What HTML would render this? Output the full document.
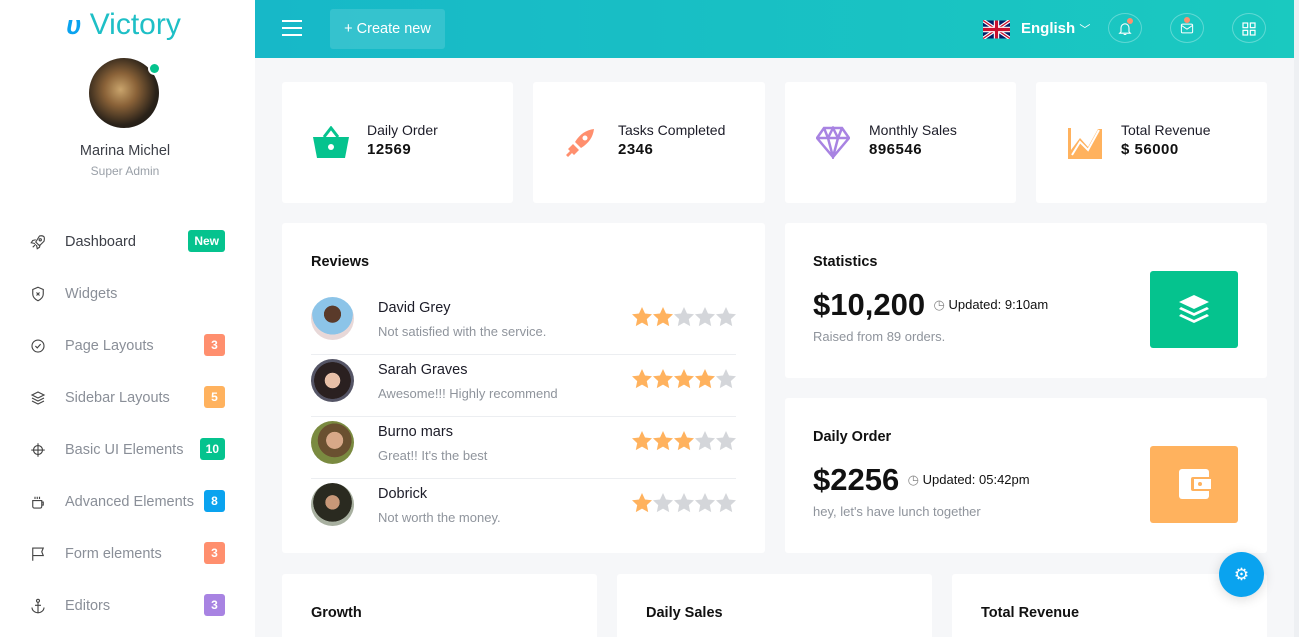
<!DOCTYPE html>
<html><head><meta charset="utf-8"><style>
*{box-sizing:border-box;margin:0;padding:0}
html,body{width:1299px;height:637px;overflow:hidden}
body{background:#f6f7f9;font-family:"Liberation Sans",sans-serif;position:relative}
.abs{position:absolute}
.side{left:0;top:0;width:255px;height:637px;background:#fff}
.hdr{left:255px;top:0;width:1039px;height:58px;background:linear-gradient(90deg,#17b8c8,#1ac9c0)}
.strip{left:1294px;top:0;width:5px;height:637px;background:#eef0f3}
.card{background:#fff;border-radius:3px;position:absolute}
.nav{position:absolute;left:0;width:255px;height:30px}
.nav svg{position:absolute;left:29px;top:7px}
.nav .t{position:absolute;left:65px;top:8px;font-size:14.5px;color:#8a8f98}
.badge{position:absolute;right:30px;top:4px;height:22px;min-width:21px;padding:0 6px;border-radius:3px;color:#fff;font-size:12px;font-weight:bold;text-align:center;line-height:22px}
.st .l{font-size:14px;color:#1c1c28}
.st .v{font-size:15px;font-weight:bold;color:#111;margin-top:3px;letter-spacing:.5px}
.rv{position:absolute;left:29px;width:425px;height:62px}
.av{position:absolute;left:0;top:4px;width:43px;height:43px;border-radius:50%}
.rv .n{position:absolute;left:67px;top:7px;font-size:14.5px;color:#1c1c28}
.rv .c{position:absolute;left:67px;top:31px;font-size:13px;color:#8f949c}
.stars{position:absolute;right:0;top:14px}
.h{font-size:14.5px;font-weight:bold;color:#111}
.big{font-size:31px;font-weight:bold;color:#111}
.up{font-size:13px;color:#111}
.sub{font-size:13px;color:#8f949c}
.ib{position:absolute;width:34px;height:30px;border-radius:50%;border:1px solid rgba(255,255,255,.3)}
</style></head><body>
<svg width="0" height="0" style="position:absolute"><defs><path id="s" d="M10 0l3 6.5 7 .8-5.2 4.8 1.4 7L10 15.6 3.8 19.1l1.4-7L0 7.3l7-.8z"/></defs></svg>
<div class="abs side">
 <div class="abs" style="left:66px;top:8px;font-size:30px;color:#1ebfc6;font-weight:500"><span style="color:#0aa3ef;font-style:italic;font-weight:bold;font-size:26px">υ</span> Victory</div>
 <div class="abs" style="left:89px;top:58px;width:70px;height:70px;border-radius:50%;background:radial-gradient(circle at 45% 45%,#c9a46c 0,#8a6238 30%,#2a2219 65%,#111 100%)"></div>
 <div class="abs" style="left:150px;top:64px;width:9px;height:9px;border-radius:50%;background:#05c38e;box-shadow:0 0 0 2px #fff"></div>
 <div class="abs" style="left:0;width:250px;top:143px;text-align:center;font-size:14.5px;color:#3c3f47">Marina Michel</div>
 <div class="abs" style="left:0;width:250px;top:164px;text-align:center;font-size:12px;color:#9aa0a8">Super Admin</div>
 <div class="nav" style="top:226px"><svg width="18" height="18" viewBox="0 0 24 24" fill="none" stroke="#444" stroke-width="1.5"><path d="M5 19l4-4M14 4c4-1 6 1 6 1s1 2 0 6l-6 6-5-5z M9 9l-4 1-2 3 5 1M15 15l-1 4-3 2-1-5"/><circle cx="15" cy="9" r="1.5"/></svg><span class="t" style="color:#3c3f47">Dashboard</span><span class="badge" style="background:#05c38e">New</span></div>
 <div class="nav" style="top:278px"><svg width="18" height="18" viewBox="0 0 24 24" fill="none" stroke="#444" stroke-width="1.5"><path d="M12 3l7 3v6c0 4-3 7-7 9-4-2-7-5-7-9V6z M10 10l4 4M14 10l-4 4"/></svg><span class="t">Widgets</span></div>
 <div class="nav" style="top:330px"><svg width="18" height="18" viewBox="0 0 24 24" fill="none" stroke="#444" stroke-width="1.5"><circle cx="12" cy="12" r="8"/><path d="M8.5 12l2.5 2.5 4.5-5"/></svg><span class="t">Page Layouts</span><span class="badge" style="background:#ff8f6e">3</span></div>
 <div class="nav" style="top:382px"><svg width="18" height="18" viewBox="0 0 24 24" fill="none" stroke="#444" stroke-width="1.5"><path d="M12 4l8 4-8 4-8-4z M4 12l8 4 8-4 M4 16l8 4 8-4"/></svg><span class="t">Sidebar Layouts</span><span class="badge" style="background:#ffb25e">5</span></div>
 <div class="nav" style="top:434px"><svg width="18" height="18" viewBox="0 0 24 24" fill="none" stroke="#444" stroke-width="1.5"><circle cx="12" cy="12" r="6"/><path d="M12 3v18M3 12h18"/></svg><span class="t">Basic UI Elements</span><span class="badge" style="background:#05c38e">10</span></div>
 <div class="nav" style="top:486px"><svg width="18" height="18" viewBox="0 0 24 24" fill="none" stroke="#444" stroke-width="1.5"><path d="M5 10h12v8a2 2 0 01-2 2H7a2 2 0 01-2-2z M17 12h2v4h-2 M8 5v3M11 5v3M14 5v3"/></svg><span class="t">Advanced Elements</span><span class="badge" style="background:#0aa3ef">8</span></div>
 <div class="nav" style="top:538px"><svg width="18" height="18" viewBox="0 0 24 24" fill="none" stroke="#444" stroke-width="1.5"><path d="M5 21V4h14l-2 5 2 5H5"/></svg><span class="t">Form elements</span><span class="badge" style="background:#ff8f6e">3</span></div>
 <div class="nav" style="top:590px"><svg width="18" height="18" viewBox="0 0 24 24" fill="none" stroke="#444" stroke-width="1.5"><circle cx="12" cy="5" r="2"/><path d="M12 7v14M8 11h8M4 14c0 4 4 7 8 7s8-3 8-7"/></svg><span class="t">Editors</span><span class="badge" style="background:#a883e2">3</span></div>
</div>
<div class="abs hdr">
 <div class="abs" style="left:27px;top:20px;width:20px;height:2px;background:#fff;box-shadow:0 7px 0 #fff,0 14px 0 #fff"></div>
 <div class="abs" style="left:75px;top:9px;width:115px;height:40px;border-radius:3px;background:rgba(255,255,255,.13);color:#fff;font-size:14.5px;line-height:40px;text-align:center">+ Create new</div>
 <svg class="abs" style="left:728px;top:20px" width="27" height="19" viewBox="0 0 60 40"><rect width="60" height="40" fill="#012169"/><path d="M0 0L60 40M60 0L0 40" stroke="#fff" stroke-width="8"/><path d="M0 0L60 40M60 0L0 40" stroke="#c8102e" stroke-width="3"/><path d="M30 0v40M0 20h60" stroke="#fff" stroke-width="12"/><path d="M30 0v40M0 20h60" stroke="#c8102e" stroke-width="7"/></svg>
 <div class="abs" style="left:766px;top:20px;color:#fff;font-size:15px;font-weight:bold">English <span style="font-weight:normal;font-size:11px">﹀</span></div>
 <div class="ib" style="left:853px;top:13px"><svg style="position:absolute;left:8px;top:6px" width="16" height="17" viewBox="0 0 24 24" fill="none" stroke="#fff" stroke-width="1.6"><path d="M6 17V11a6 6 0 0112 0v6l2 2H4z M10 21h4"/></svg><span class="abs" style="left:18px;top:4px;width:6px;height:6px;border-radius:50%;background:#ff8f6e"></span></div>
 <div class="ib" style="left:915px;top:13px"><svg style="position:absolute;left:8px;top:7px" width="16" height="15" viewBox="0 0 24 24" fill="none" stroke="#fff" stroke-width="1.6"><rect x="3" y="5" width="18" height="14" rx="2"/><path d="M3 7l9 6 9-6"/></svg><span class="abs" style="left:13px;top:3px;width:6px;height:6px;border-radius:50%;background:#ff8f6e"></span></div>
 <div class="ib" style="left:977px;top:13px"><svg style="position:absolute;left:8px;top:7px" width="16" height="16" viewBox="0 0 24 24" fill="none" stroke="#fff" stroke-width="1.8"><rect x="3" y="3" width="7" height="7"/><rect x="14" y="3" width="7" height="7"/><rect x="3" y="14" width="7" height="7"/><rect x="14" y="14" width="7" height="7"/></svg></div>
</div>
<div class="abs strip"></div>

<div class="card" style="left:282px;top:82px;width:231px;height:121px">
 <svg class="abs" style="left:31px;top:44px" width="36" height="32" viewBox="0 0 36 32"><path d="M11 11L18 2l7 9" stroke="#05c38e" stroke-width="3" fill="none"/><path d="M0 11h36l-4 21H4z" fill="#05c38e"/><circle cx="18" cy="21" r="3" fill="#fff"/></svg>
 <div class="abs st" style="left:85px;top:40px"><div class="l">Daily Order</div><div class="v">12569</div></div></div>
<div class="card" style="left:533px;top:82px;width:232px;height:121px">
 <svg class="abs" style="left:32px;top:46px" width="30" height="30" viewBox="0 0 30 30"><path d="M29 1c-8 1-14 5-19 13l6 6c8-5 12-11 13-19z" fill="#ff8f6e"/><circle cx="20" cy="10" r="2.5" fill="#fff"/><path d="M8 16l6 6-5 5-6-6z M1 27l5-5 2 2-5 5z" fill="#ff8f6e"/></svg>
 <div class="abs st" style="left:85px;top:40px"><div class="l">Tasks Completed</div><div class="v">2346</div></div></div>
<div class="card" style="left:785px;top:82px;width:231px;height:121px">
 <svg class="abs" style="left:31px;top:44px" width="34" height="33" viewBox="0 0 34 33"><path d="M8 2h18l7 10-16 19L1 12z M1 12h32 M8 2l4 10 5 19 5-19 4-10 M12 12l5-10 5 10" fill="none" stroke="#a883e2" stroke-width="2.5"/></svg>
 <div class="abs st" style="left:84px;top:40px"><div class="l">Monthly Sales</div><div class="v">896546</div></div></div>
<div class="card" style="left:1036px;top:82px;width:231px;height:121px">
 <svg class="abs" style="left:32px;top:46px" width="34" height="31" viewBox="0 0 34 31"><path d="M0 0h3v22l9-12 8 9 10-18h4v30H0z" fill="#ffb25e"/><path d="M4 27l8-13 8 8 11-20" stroke="#fff" stroke-width="2" fill="none"/></svg>
 <div class="abs st" style="left:85px;top:40px"><div class="l">Total Revenue</div><div class="v">$ 56000</div></div></div>

<div class="card" style="left:282px;top:223px;width:483px;height:330px">
 <div class="abs h" style="left:29px;top:31px">Reviews</div>
 <div class="rv" style="top:70px;border-bottom:1px solid #eceef1"><div class="av" style="background:radial-gradient(circle at 50% 40%,#5a3a2a 0 25%,#8cc4e8 26% 60%,#e8d8d8 61%)"></div><div class="n">David Grey</div><div class="c">Not satisfied with the service.</div>
  <svg class="stars" width="104" height="20"><use href="#s" x="0" fill="#ffb25e"/><use href="#s" x="21" fill="#ffb25e"/><use href="#s" x="42" fill="#d4d6da"/><use href="#s" x="63" fill="#d4d6da"/><use href="#s" x="84" fill="#d4d6da"/></svg></div>
 <div class="rv" style="top:132px;border-bottom:1px solid #eceef1"><div class="av" style="background:radial-gradient(circle at 50% 50%,#e8c0a8 0 25%,#2a2020 26% 60%,#556 61%)"></div><div class="n">Sarah Graves</div><div class="c">Awesome!!! Highly recommend</div>
  <svg class="stars" width="104" height="20"><use href="#s" x="0" fill="#ffb25e"/><use href="#s" x="21" fill="#ffb25e"/><use href="#s" x="42" fill="#ffb25e"/><use href="#s" x="63" fill="#ffb25e"/><use href="#s" x="84" fill="#d4d6da"/></svg></div>
 <div class="rv" style="top:194px;border-bottom:1px solid #eceef1"><div class="av" style="background:radial-gradient(circle at 55% 45%,#d8a888 0 25%,#6a5030 26% 50%,#7a8a40 51%)"></div><div class="n">Burno mars</div><div class="c">Great!! It's the best</div>
  <svg class="stars" width="104" height="20"><use href="#s" x="0" fill="#ffb25e"/><use href="#s" x="21" fill="#ffb25e"/><use href="#s" x="42" fill="#ffb25e"/><use href="#s" x="63" fill="#d4d6da"/><use href="#s" x="84" fill="#d4d6da"/></svg></div>
 <div class="rv" style="top:256px"><div class="av" style="background:radial-gradient(circle at 50% 45%,#c89878 0 22%,#2a2a20 23% 60%,#a8b0a0 61%)"></div><div class="n">Dobrick</div><div class="c">Not worth the money.</div>
  <svg class="stars" width="104" height="20"><use href="#s" x="0" fill="#ffb25e"/><use href="#s" x="21" fill="#d4d6da"/><use href="#s" x="42" fill="#d4d6da"/><use href="#s" x="63" fill="#d4d6da"/><use href="#s" x="84" fill="#d4d6da"/></svg></div>
</div>

<div class="card" style="left:785px;top:223px;width:482px;height:155px">
 <div class="abs h" style="left:28px;top:31px">Statistics</div>
 <div class="abs" style="left:28px;top:64px;white-space:nowrap"><span class="big">$10,200</span> <span class="up" style="position:relative;top:-6px;margin-left:4px"><span style="color:#888">◷</span> Updated: 9:10am</span></div>
 <div class="abs sub" style="left:28px;top:106px">Raised from 89 orders.</div>
 <div class="abs" style="left:365px;top:48px;width:88px;height:77px;border-radius:3px;background:#05c38e"><svg style="position:absolute;left:28px;top:22px" width="32" height="32" viewBox="0 0 32 32" fill="#fff"><path d="M16 2l15 7-15 7-15-7z"/><path d="M3 14l13 6 13-6 2 2-15 7-15-7z"/><path d="M3 21l13 6 13-6 2 2-15 7-15-7z"/></svg></div>
</div>
<div class="card" style="left:785px;top:398px;width:482px;height:155px">
 <div class="abs h" style="left:28px;top:31px">Daily Order</div>
 <div class="abs" style="left:28px;top:64px;white-space:nowrap"><span class="big">$2256</span> <span class="up" style="position:relative;top:-6px;margin-left:4px"><span style="color:#888">◷</span> Updated: 05:42pm</span></div>
 <div class="abs sub" style="left:28px;top:106px">hey, let's have lunch together</div>
 <div class="abs" style="left:365px;top:48px;width:88px;height:77px;border-radius:3px;background:#ffb25e"><svg style="position:absolute;left:29px;top:22px" width="32" height="32" viewBox="0 0 32 32"><rect x="0" y="1" width="30" height="30" rx="3" fill="#fff"/><rect x="12" y="9" width="20" height="14" rx="2" fill="#ffb25e"/><rect x="15" y="11" width="17" height="10" fill="#fff"/><circle cx="21" cy="16" r="2" fill="#ffb25e"/></svg></div>
</div>

<div class="card" style="left:282px;top:574px;width:315px;height:70px"><div class="abs h" style="left:29px;top:31px">Growth</div></div>
<div class="card" style="left:617px;top:574px;width:315px;height:70px"><div class="abs h" style="left:29px;top:31px">Daily Sales</div></div>
<div class="card" style="left:952px;top:574px;width:315px;height:70px"><div class="abs h" style="left:29px;top:31px">Total Revenue</div></div>

<div class="abs" style="left:1219px;top:552px;width:45px;height:45px;border-radius:50%;background:#0aa3ef;box-shadow:0 2px 12px rgba(0,0,0,.15);color:#fff;text-align:center;line-height:45px;font-size:17px">⚙</div>
</body></html>
